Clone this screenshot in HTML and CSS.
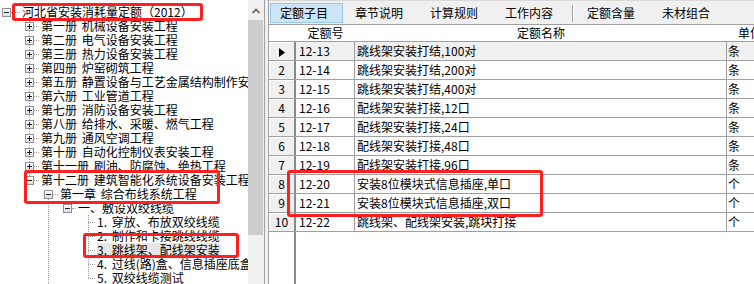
FILE: index.html
```html
<!DOCTYPE html>
<html lang="zh-CN">
<head>
    <meta charset="UTF-8">
    <meta name="viewport" content="width=device-width, initial-scale=1.0">
    <title>安装消耗量定额</title>
    <link rel="stylesheet" href="styles.css">
</head>
<body>
    <div class="window">
        <div class="left-pane">
            <div class="tree">
                <div class="node lv0"><span class="box minus"></span><span class="dots"></span><span class="label">河北省安装消耗量定额（2012）</span></div>
                <div class="node lv1 trunk"><span class="box plus"></span><span class="dots"></span><span class="label">第一册 机械设备安装工程</span></div>
                <div class="node lv1 trunk"><span class="box plus"></span><span class="dots"></span><span class="label">第二册 电气设备安装工程</span></div>
                <div class="node lv1 trunk"><span class="box plus"></span><span class="dots"></span><span class="label">第三册 热力设备安装工程</span></div>
                <div class="node lv1 trunk"><span class="box plus"></span><span class="dots"></span><span class="label">第四册 炉窑砌筑工程</span></div>
                <div class="node lv1 trunk"><span class="box plus"></span><span class="dots"></span><span class="label">第五册 静置设备与工艺金属结构制作安装工程</span></div>
                <div class="node lv1 trunk"><span class="box plus"></span><span class="dots"></span><span class="label">第六册 工业管道工程</span></div>
                <div class="node lv1 trunk"><span class="box plus"></span><span class="dots"></span><span class="label">第七册 消防设备安装工程</span></div>
                <div class="node lv1 trunk"><span class="box plus"></span><span class="dots"></span><span class="label">第八册 给排水、采暖、燃气工程</span></div>
                <div class="node lv1 trunk"><span class="box plus"></span><span class="dots"></span><span class="label">第九册 通风空调工程</span></div>
                <div class="node lv1 trunk"><span class="box plus"></span><span class="dots"></span><span class="label">第十册 自动化控制仪表安装工程</span></div>
                <div class="node lv1 trunk"><span class="box plus"></span><span class="dots"></span><span class="label">第十一册 刷油、防腐蚀、绝热工程</span></div>
                <div class="node lv1 trunk-end"><span class="box minus"></span><span class="dots"></span><span class="label">第十二册 建筑智能化系统设备安装工程</span></div>
                <div class="node lv2 ch-first"><span class="box minus"></span><span class="dots"></span><span class="label">第一章 综合布线系统工程</span></div>
                <div class="node lv3 ch"><span class="box minus"></span><span class="dots"></span><span class="label">一、敷设双绞线缆</span></div>
                <div class="node lv4 leaf"><span class="dots"></span><span class="label">1. 穿放、布放双绞线缆</span></div>
                <div class="node lv4 leaf"><span class="dots"></span><span class="label">2. 制作和卡接跳线线缆</span></div>
                <div class="node lv4 leaf"><span class="dots"></span><span class="label selected">3. 跳线架、配线架安装</span></div>
                <div class="node lv4 leaf"><span class="dots"></span><span class="label">4. 过线(路)盒、信息插座底盒安装</span></div>
                <div class="node lv4 leaf-end"><span class="dots"></span><span class="label">5. 双绞线缆测试</span></div>
            </div>
            <div class="vscroll">
                <div class="scroll-btn">
                    <svg width="16" height="17" viewBox="0 0 16 17"><polyline points="4.5,13 8,9.5 11.5,13" fill="none" stroke="#606060" stroke-width="1.6"/></svg>
                </div>
                <div class="scroll-thumb"></div>
            </div>
        </div>
        <div class="splitter"></div>
        <div class="right-pane">
            <div class="tabs">
                <div class="tab active">定额子目</div>
                <div class="tab">章节说明</div>
                <div class="tab">计算规则</div>
                <div class="tab">工作内容</div>
                <div class="tab-sep"></div>
                <div class="tab">定额含量</div>
                <div class="tab">未材组合</div>
            </div>
            <div class="grid">
                <div class="grid-head">
                    <div class="ind"></div>
                    <div class="code">定额号</div>
                    <div class="name">定额名称</div>
                    <div class="unit">单位</div>
                </div>
                <div class="grid-body">
                    <div class="row current">
                        <div class="ind"><svg width="6" height="9" viewBox="0 0 6 9"><polygon points="0,0 6,4.5 0,9" fill="#000"/></svg></div>
                        <div class="code">12-13</div><div class="name">跳线架安装打结,100对</div><div class="unit">条</div>
                    </div>
                    <div class="row"><div class="ind">2</div><div class="code">12-14</div><div class="name">跳线架安装打结,200对</div><div class="unit">条</div></div>
                    <div class="row"><div class="ind">3</div><div class="code">12-15</div><div class="name">跳线架安装打结,400对</div><div class="unit">条</div></div>
                    <div class="row"><div class="ind">4</div><div class="code">12-16</div><div class="name">配线架安装打接,12口</div><div class="unit">条</div></div>
                    <div class="row"><div class="ind">5</div><div class="code">12-17</div><div class="name">配线架安装打接,24口</div><div class="unit">条</div></div>
                    <div class="row"><div class="ind">6</div><div class="code">12-18</div><div class="name">配线架安装打接,48口</div><div class="unit">条</div></div>
                    <div class="row"><div class="ind">7</div><div class="code">12-19</div><div class="name">配线架安装打接,96口</div><div class="unit">条</div></div>
                    <div class="row"><div class="ind">8</div><div class="code">12-20</div><div class="name">安装8位模块式信息插座,单口</div><div class="unit">个</div></div>
                    <div class="row"><div class="ind">9</div><div class="code">12-21</div><div class="name">安装8位模块式信息插座,双口</div><div class="unit">个</div></div>
                    <div class="row"><div class="ind">10</div><div class="code">12-22</div><div class="name">跳线架、配线架安装,跳块打接</div><div class="unit">个</div></div>
                </div>
            </div>
        </div>
    </div>

    <!-- red annotation frames -->
    <div class="mark mark-root"></div>
    <div class="mark mark-volume"></div>
    <div class="mark mark-section"></div>
    <div class="mark mark-rows"></div>
</body>
</html>
```

FILE: styles.css
```css
body, html {
    margin: 0;
    padding: 0;
}
body {
    position: relative;
    width: 754px;
    height: 284px;
    overflow: hidden;
    background: #fff;
    color: #000;
    font-family: "Noto Sans CJK SC", "Noto Sans", sans-serif;
    font-size: 12px;
}
.window {
    display: flex;
    height: 284px;
}

/* left tree */
.left-pane {
    display: flex;
    width: 265px;
    flex: none;
    border-right: 1px solid #a0a0a0;
    box-sizing: border-box;
}
.tree {
    width: 248px;
    flex: none;
    overflow: hidden;
    padding-top: 5px;
    box-sizing: border-box;
}
.node {
    display: flex;
    align-items: center;
    height: 14px;
    line-height: 14px;
    white-space: nowrap;
    background-repeat: no-repeat;
}
.node.lv0 { padding-left: 2px; }
.node.lv1 { padding-left: 25px; }
.node.lv2 { padding-left: 44px; }
.node.lv3 { padding-left: 63px; }
.node.lv4 { padding-left: 88px; }
.box {
    position: relative;
    flex: none;
    width: 9px;
    height: 9px;
    border: 1px solid #919191;
    box-sizing: border-box;
    background: linear-gradient(#ffffff, #dedede);
}
.box::before {
    content: "";
    position: absolute;
    left: 1px;
    top: 3px;
    width: 5px;
    height: 1px;
    background: #1b1b3a;
}
.box.plus::after {
    content: "";
    position: absolute;
    left: 3px;
    top: 1px;
    width: 1px;
    height: 5px;
    background: #1b1b3a;
}
.dots {
    flex: none;
    height: 0;
    border-top: 1px dotted #a0a0a0;
}
.lv0 .dots { width: 9px; }
.lv1 .dots { width: 5px; }
.lv2 .dots { width: 5px; }
.lv3 .dots { width: 4px; }
.lv4 .dots { width: 7px; }
.label {
    margin-left: 2px;
    padding-right: 1px;
    word-spacing: 2px;
}
.label.selected {
    background: #e6e6e6;
}
.trunk {
    background-image: repeating-linear-gradient(to bottom, #a0a0a0 0 1px, transparent 1px 2px);
    background-position: 29px 0;
    background-size: 1px 14px;
}
.trunk-end {
    background-image: repeating-linear-gradient(to bottom, #a0a0a0 0 1px, transparent 1px 2px);
    background-position: 29px 0;
    background-size: 1px 7px;
}
.ch-first {
    background-image: repeating-linear-gradient(to bottom, #a0a0a0 0 1px, transparent 1px 2px);
    background-position: 48px 8px;
    background-size: 1px 6px;
}
.ch {
    background-image: repeating-linear-gradient(to bottom, #a0a0a0 0 1px, transparent 1px 2px);
    background-position: 48px 0;
    background-size: 1px 14px;
}
.leaf {
    background-image: repeating-linear-gradient(to bottom, #a0a0a0 0 1px, transparent 1px 2px),
                      repeating-linear-gradient(to bottom, #a0a0a0 0 1px, transparent 1px 2px);
    background-position: 48px 0, 88px 0;
    background-size: 1px 14px, 1px 14px;
}
.leaf-end {
    background-image: repeating-linear-gradient(to bottom, #a0a0a0 0 1px, transparent 1px 2px),
                      repeating-linear-gradient(to bottom, #a0a0a0 0 1px, transparent 1px 2px);
    background-position: 48px 0, 88px 0;
    background-size: 1px 14px, 1px 7px;
}

/* scrollbar */
.vscroll {
    width: 16px;
    flex: none;
    background: #f0f0f0;
}
.scroll-btn {
    height: 17px;
}
.scroll-btn svg {
    display: block;
}
.scroll-thumb {
    width: 15px;
    height: 215px;
    margin-top: 3px;
    background: #cdcdcd;
}
.splitter {
    width: 3px;
    flex: none;
    background: #f0f0f0;
}

/* right side */
.right-pane {
    flex: 1;
    display: flex;
    flex-direction: column;
    border-left: 1px solid #a0a0a0;
    min-width: 0;
}
.tabs {
    display: flex;
    height: 25px;
    padding: 2px 0 0 1px;
    box-sizing: border-box;
    border-top: 1px solid #dadada;
    border-bottom: 1px solid #a0a0a0;
    background: #f0f0f0;
}
.tab {
    width: 73px;
    height: 20px;
    margin-right: 2px;
    padding-left: 9px;
    box-sizing: border-box;
    border: 1px solid transparent;
    line-height: 18px;
    white-space: nowrap;
}
.tab.active {
    background: #cce4f7;
    border-color: #99c9ef;
}
.tab-sep {
    width: 1px;
    height: 17px;
    margin: 2px 4px 0 2px;
    background: #a0a0a0;
    box-shadow: 1px 0 0 #fff;
}
.grid {
    flex: 1;
    display: flex;
    flex-direction: column;
    background: #fff;
}
.grid-head {
    display: flex;
    height: 17px;
    line-height: 16px;
    border-bottom: 1px solid #a0a0a0;
    box-sizing: border-box;
    white-space: nowrap;
}
.grid-head .ind { width: 27px; flex: none; }
.grid-head .code { width: 59px; flex: none; text-align: center; }
.grid-head .name { width: 372px; flex: none; text-align: center; }
.grid-head .unit { padding-left: 11px; }
.grid-body {
    flex: 1;
    background: linear-gradient(#8a8a8a, #8a8a8a) 25px 0 / 2px 100% no-repeat, #fff;
}
.row {
    display: flex;
    height: 19px;
    line-height: 18px;
    border-bottom: 1px solid #a0a0a0;
    box-sizing: border-box;
    white-space: nowrap;
}
.row .ind {
    width: 25px;
    flex: none;
    margin-right: 2px;
    text-align: center;
    background: #f0f0f0;
    box-shadow: inset 1px 1px 0 #fff;
}
.row .ind svg {
    vertical-align: -1px;
    margin-left: 1px;
}
.row .code {
    width: 55px;
    flex: none;
    padding-left: 3px;
    border-right: 1px solid #a0a0a0;
}
.row .name {
    width: 369px;
    flex: none;
    padding-left: 2px;
    border-right: 1px solid #a0a0a0;
    overflow: hidden;
}
.row .unit {
    flex: 1;
    padding-left: 1px;
}
.row.current .code,
.row.current .name,
.row.current .unit {
    background: #f0f0f0;
}

/* red annotation frames */
.mark {
    position: absolute;
    border: 3px solid #fe2020;
    border-radius: 3px;
    box-sizing: border-box;
    pointer-events: none;
}
.mark-root { left: 12px; top: 3px; width: 191px; height: 18px; }
.mark-volume { left: 24px; top: 170px; width: 196px; height: 34px; }
.mark-section { left: 83px; top: 233px; width: 156px; height: 25px; }
.mark-rows { left: 287px; top: 170px; width: 256px; height: 47px; }
```
